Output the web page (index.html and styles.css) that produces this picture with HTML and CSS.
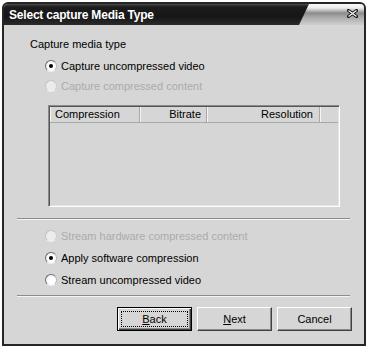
FILE: index.html
```html
<!DOCTYPE html>
<html lang="en">
<head>
    <meta charset="UTF-8">
    <title>Select capture Media Type</title>
    <link rel="stylesheet" href="styles.css">
</head>
<body>
    <div class="window">
        <div class="titlebar">
            <span class="title">Select capture Media Type</span>
            <div class="title-cap">
                <svg class="close" width="11" height="9" viewBox="0 0 11 9">
                    <path d="M1.5 1.5 L9.5 7.5 M9.5 1.5 L1.5 7.5" stroke="#111" stroke-width="3" stroke-linecap="square" fill="none"/>
                    <path d="M1.5 1.5 L9.5 7.5 M9.5 1.5 L1.5 7.5" stroke="#fff" stroke-width="1.2" fill="none"/>
                </svg>
            </div>
        </div>
        <div class="content">
            <div class="group-label">Capture media type</div>
            <div class="options top">
                <div class="option"><span class="radio checked"></span>Capture uncompressed video</div>
                <div class="option disabled"><span class="radio"></span>Capture compressed content</div>
            </div>
            <div class="listbox">
                <div class="list-header">
                    <div class="col col-compression">Compression</div>
                    <div class="col col-bitrate">Bitrate</div>
                    <div class="col col-resolution">Resolution</div>
                    <div class="col col-fill"></div>
                </div>
            </div>
            <div class="separator first"></div>
            <div class="options bottom">
                <div class="option disabled"><span class="radio"></span>Stream hardware compressed content</div>
                <div class="option"><span class="radio checked"></span>Apply software compression</div>
                <div class="option"><span class="radio"></span>Stream uncompressed video</div>
            </div>
            <div class="separator second"></div>
            <div class="buttons">
                <button class="btn default"><u>B</u>ack</button>
                <button class="btn"><u>N</u>ext</button>
                <button class="btn">Cancel</button>
            </div>
        </div>
    </div>
</body>
</html>
```

FILE: styles.css
```css
* {
    margin: 0;
    padding: 0;
    box-sizing: border-box;
}
body {
    background: #fff;
    font-family: "Liberation Sans", Arial, sans-serif;
    font-size: 11px;
    color: #000;
}
.window {
    margin: 2px 0 0 2px;
    width: 364px;
    height: 344px;
    border: 2px solid #262626;
    border-radius: 6px 6px 0 0;
    background: #d6d6d6;
    overflow: hidden;
    display: flex;
    flex-direction: column;
}
.titlebar {
    height: 21px;
    display: flex;
    background: linear-gradient(#4a4a4a, #1c1c1c 3px, #161616 60%, #2a2a2a);
}
.title {
    flex: 1;
    padding: 4px 0 0 5px;
    color: #fff;
    font-weight: bold;
    font-size: 12px;
    line-height: 14px;
    letter-spacing: -0.2px;
}
.title-cap {
    width: 65px;
    clip-path: polygon(10px 0, 100% 0, 100% 100%, 0 100%);
    background: linear-gradient(#fafafa 0, #ececec 4px, #8c8c8c 9px, #a8a8a8 13px, #cfcfcf 21px);
    display: flex;
    justify-content: flex-end;
    align-items: flex-start;
    padding: 5px 6px 0 0;
}
.content {
    flex: 1;
    display: flex;
    flex-direction: column;
}
.group-label {
    margin: 12px 0 0 26px;
    line-height: 14px;
}
.options {
    margin-left: 41px;
}
.options.top {
    margin-top: 5px;
}
.options.bottom {
    margin-top: 5px;
}
.option {
    height: 20px;
    display: flex;
    align-items: center;
    gap: 4px;
    line-height: 14px;
}
.bottom .option {
    height: 22px;
}
.option.disabled {
    color: #ababab;
}
.radio {
    width: 12px;
    height: 12px;
    border-radius: 50%;
    border: 1px solid;
    border-color: #6e6e6e #b8b8b8 #f0f0f0 #6e6e6e;
    background: radial-gradient(circle at 60% 60%, #fff 40%, #e2e2e2);
    display: flex;
    align-items: center;
    justify-content: center;
    flex-shrink: 0;
}
.disabled .radio {
    border-color: #c2c2c2 #d0d0d0 #eeeeee #c2c2c2;
    background: #ececec;
}
.radio.checked::after {
    content: "";
    width: 4px;
    height: 4px;
    border-radius: 50%;
    background: #000;
}
.listbox {
    margin: 9px 0 0 44px;
    width: 292px;
    height: 102px;
    border: 1px solid;
    border-color: #8a8a8a #fff #fff #8a8a8a;
    box-shadow: inset 1px 1px #555, inset -1px -1px #e4e4e4;
    padding: 1px;
}
.list-header {
    display: flex;
    height: 16px;
    border-bottom: 1px solid #a8a8a8;
    line-height: 15px;
}
.col {
    border-right: 1px solid #a8a8a8;
    box-shadow: inset 1px 0 #f4f4f4;
}
.col-compression {
    width: 90px;
    padding-left: 5px;
}
.col-bitrate {
    width: 67px;
    text-align: right;
    padding-right: 5px;
}
.col-resolution {
    width: 113px;
    text-align: right;
    padding-right: 6px;
}
.col-fill {
    flex: 1;
    border-right: 0;
}
.separator {
    margin-left: 13px;
    width: 333px;
    height: 2px;
    border-top: 1px solid #8c8c8c;
    border-bottom: 1px solid #f4f4f4;
}
.separator.first {
    margin-top: 11px;
}
.separator.second {
    margin-top: 4px;
}
.buttons {
    margin: 10px 12px 0 0;
    display: flex;
    justify-content: flex-end;
    gap: 5px;
}
.btn {
    width: 75px;
    height: 24px;
    font-family: "Liberation Sans", Arial, sans-serif;
    font-size: 11px;
    color: #000;
    background: #d6d6d6;
    border: 1px solid;
    border-color: #fff #404040 #404040 #fff;
    box-shadow: inset -1px -1px #8a8a8a;
}
.btn.default {
    border: 1px solid #000;
    box-shadow: inset 1px 1px #fff, inset -1px -1px #404040, inset -2px -2px #8a8a8a;
    outline: 1px dotted #000;
    outline-offset: -5px;
}
.btn u {
    text-decoration: underline;
}
```
